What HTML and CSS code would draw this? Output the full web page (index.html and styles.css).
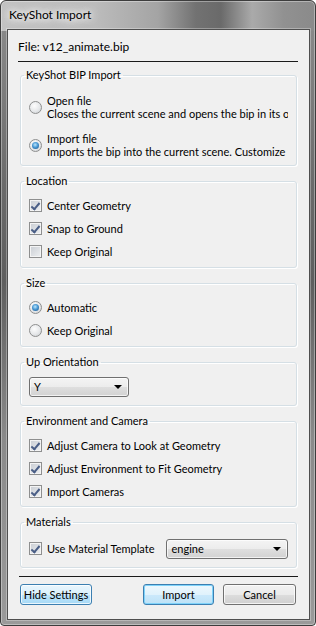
FILE: index.html
```html
<!DOCTYPE html>
<html lang="en">
<head>
  <meta charset="UTF-8" />
  <title>KeyShot Import</title>
  <link rel="stylesheet" href="styles.css">
</head>
<body>
  <div class="window">
    <div class="titlebar">
      <span class="title">KeyShot Import</span>
    </div>

    <div class="client">
      <div class="file-name">File: v12_animate.bip</div>
      <div class="separator"></div>

      <fieldset class="group group-bip">
        <legend>KeyShot BIP Import</legend>
        <label class="option">
          <span class="radio"></span>
          <span class="option-text">
            <span>Open file</span>
            <span>Closes the current scene and opens the bip in its own scene.</span>
          </span>
        </label>
        <label class="option">
          <span class="radio checked"></span>
          <span class="option-text">
            <span>Import file</span>
            <span>Imports the bip into the current scene. Customize the import below.</span>
          </span>
        </label>
      </fieldset>

      <fieldset class="group">
        <legend>Location</legend>
        <label class="row"><span class="check checked"></span>Center Geometry</label>
        <label class="row"><span class="check checked"></span>Snap to Ground</label>
        <label class="row"><span class="check"></span>Keep Original</label>
      </fieldset>

      <fieldset class="group">
        <legend>Size</legend>
        <label class="row"><span class="radio checked"></span>Automatic</label>
        <label class="row"><span class="radio"></span>Keep Original</label>
      </fieldset>

      <fieldset class="group group-up">
        <legend>Up Orientation</legend>
        <div class="row">
          <div class="combo combo-up">Y<span class="arrow"></span></div>
        </div>
      </fieldset>

      <fieldset class="group group-env">
        <legend>Environment and Camera</legend>
        <label class="row"><span class="check checked"></span>Adjust Camera to Look at Geometry</label>
        <label class="row"><span class="check checked"></span>Adjust Environment to Fit Geometry</label>
        <label class="row"><span class="check checked"></span>Import Cameras</label>
      </fieldset>

      <fieldset class="group group-mat">
        <legend>Materials</legend>
        <div class="row">
          <label class="row-label"><span class="check checked"></span>Use Material Template</label>
          <div class="combo combo-mat">engine<span class="arrow"></span></div>
        </div>
      </fieldset>

      <div class="separator separator-bottom"></div>

      <div class="buttons">
        <button class="btn btn-hot btn-hide">Hide Settings</button>
        <button class="btn btn-default btn-import">Import</button>
        <button class="btn btn-cancel">Cancel</button>
      </div>
    </div>
  </div>
</body>
</html>
```

FILE: styles.css
```css
* {
  box-sizing: border-box;
  margin: 0;
  padding: 0;
}

body {
  font-family: Lato, "Segoe UI", sans-serif;
  font-size: 11px;
  color: #000;
  background: #fff;
  overflow: hidden;
}

/* window frame */
.window {
  width: 316px;
  height: 626px;
  display: flex;
  flex-direction: column;
  border: 1px solid #3d3d3d;
  border-radius: 6px 6px 4px 4px;
  padding: 0 5px 5px 6px;
  background:
    linear-gradient(to right, #c2c2c2 0%, #bcbcbc 30%, #a4a4a4 50%, #727272 62%, #6a6a6a 70%, #aaaaaa 80%, #919191 90%, #8a8a8a 100%) top / 100% 30px no-repeat,
    linear-gradient(to bottom, #8e8e8e 0%, #6a6a6a 30%, #5e5e5e 45%, #8a8a8a 70%, #9a9a9a 100%);
  box-shadow: inset 0 0 0 1px rgba(255, 255, 255, 0.35);
}

.titlebar {
  height: 28px;
  padding: 6px 0 0 2px;
  font-size: 12px;
  line-height: 16px;
}

.title {
  color: #000;
  text-shadow: 0 0 6px #fff, 0 0 10px #fff, 0 0 14px #fff;
}

.client {
  flex: 1;
  display: flex;
  flex-direction: column;
  border: 1px solid #4f4f4f;
  background: #f0f0f0;
  padding: 9px 11px 0 10px;
  box-shadow: 0 0 0 1px rgba(255, 255, 255, 0.3);
}

.file-name {
  font-size: 12px;
  line-height: 16px;
}

.separator {
  height: 1px;
  background: #1a1a1a;
  margin: 6px 0 5px;
}

.separator-bottom {
  margin: 8px 0 7px 1px;
}

/* group boxes */
.group {
  border: 1px solid #d5dfe5;
  border-radius: 3px;
  margin: 0 1px 7px 2px;
  padding: 5px 8px 4px 8px;
  min-width: 0;
  box-shadow: inset 1px 1px 0 #fff, 1px 1px 0 #fff;
}

.group legend {
  line-height: 16px;
  padding: 0 2px;
  margin-left: -5px;
}

.group-bip {
  padding-bottom: 1px;
}

.group-up {
  padding-bottom: 7px;
}

.group-env {
  padding-bottom: 3px;
}

.group-mat {
  padding-top: 7px;
  padding-bottom: 7px;
  margin-bottom: 0;
}

.row {
  height: 23px;
  display: flex;
  align-items: center;
  gap: 5px;
  line-height: 16px;
  white-space: nowrap;
}

.row-label {
  display: flex;
  align-items: center;
  gap: 5px;
}

.option {
  display: flex;
  align-items: center;
  gap: 5px;
  padding: 6px 0;
  overflow: hidden;
}

.option-text {
  display: flex;
  flex-direction: column;
  line-height: 13px;
  white-space: nowrap;
  overflow: hidden;
  min-width: 0;
}

/* checkbox */
.check {
  position: relative;
  flex: none;
  width: 13px;
  height: 13px;
  border: 1px solid #8e8f8f;
  background: linear-gradient(135deg, #c9cdd3, #eef0f2);
  box-shadow: inset 0 0 0 1px #f4f4f4;
}

.check.checked::after {
  content: "";
  position: absolute;
  left: 2px;
  top: 1px;
  width: 3px;
  height: 7px;
  border: solid #4a5e86;
  border-width: 0 2px 2px 0;
  transform: translate(1px, 0) rotate(40deg);
}

/* radio button */
.radio {
  position: relative;
  flex: none;
  width: 13px;
  height: 13px;
  border: 1px solid #8e8f8f;
  border-radius: 50%;
  background: radial-gradient(circle at 40% 35%, #fdfdfd 0%, #e6e8ea 55%, #c6cacd 100%);
}

.radio.checked::after {
  content: "";
  position: absolute;
  left: 2px;
  top: 2px;
  width: 7px;
  height: 7px;
  border-radius: 50%;
  background: radial-gradient(circle at 45% 40%, #bde6fb 0%, #4a9ad6 45%, #14497d 100%);
}

/* combo boxes */
.combo {
  position: relative;
  height: 20px;
  line-height: 18px;
  padding-left: 4px;
  border: 1px solid #707070;
  border-radius: 3px;
  background: linear-gradient(to bottom, #f4f4f4 0%, #ececec 50%, #dedede 51%, #d2d2d2 100%);
  box-shadow: inset 0 0 0 1px rgba(255, 255, 255, 0.7);
}

.combo-up {
  width: 100px;
}

.combo-mat {
  flex: 1;
  margin-left: 7px;
}

.arrow {
  position: absolute;
  right: 6px;
  top: 7px;
  width: 0;
  height: 0;
  border-left: 4px solid transparent;
  border-right: 4px solid transparent;
  border-top: 4px solid #000;
}

/* dialog buttons */
.buttons {
  display: flex;
  gap: 9px;
  margin: 0 2px 0 2px;
}

.btn {
  height: 21px;
  padding: 0;
  white-space: nowrap;
  font-family: inherit;
  font-size: 11px;
  color: #000;
  border: 1px solid #707070;
  border-radius: 3px;
  background: linear-gradient(to bottom, #f2f2f2 0%, #ebebeb 50%, #dddddd 51%, #cfcfcf 100%);
  box-shadow: inset 0 0 0 1px rgba(255, 255, 255, 0.75);
}

.btn-hide {
  width: 72px;
  margin-right: auto;
}

.btn-import {
  width: 71px;
}

.btn-cancel {
  width: 73px;
}

.btn-hot {
  border-color: #3c7fb1;
  background: linear-gradient(to bottom, #eaf6fd 0%, #d9f0fc 50%, #bee6fd 51%, #a7d9f5 100%);
}

.btn-default {
  border-color: #3c7fb1;
  background: linear-gradient(to bottom, #eef8fd 0%, #e0f2fc 50%, #cbe9fb 51%, #bde2f7 100%);
  box-shadow: inset 0 0 0 1px #7fd3fa;
}
```
